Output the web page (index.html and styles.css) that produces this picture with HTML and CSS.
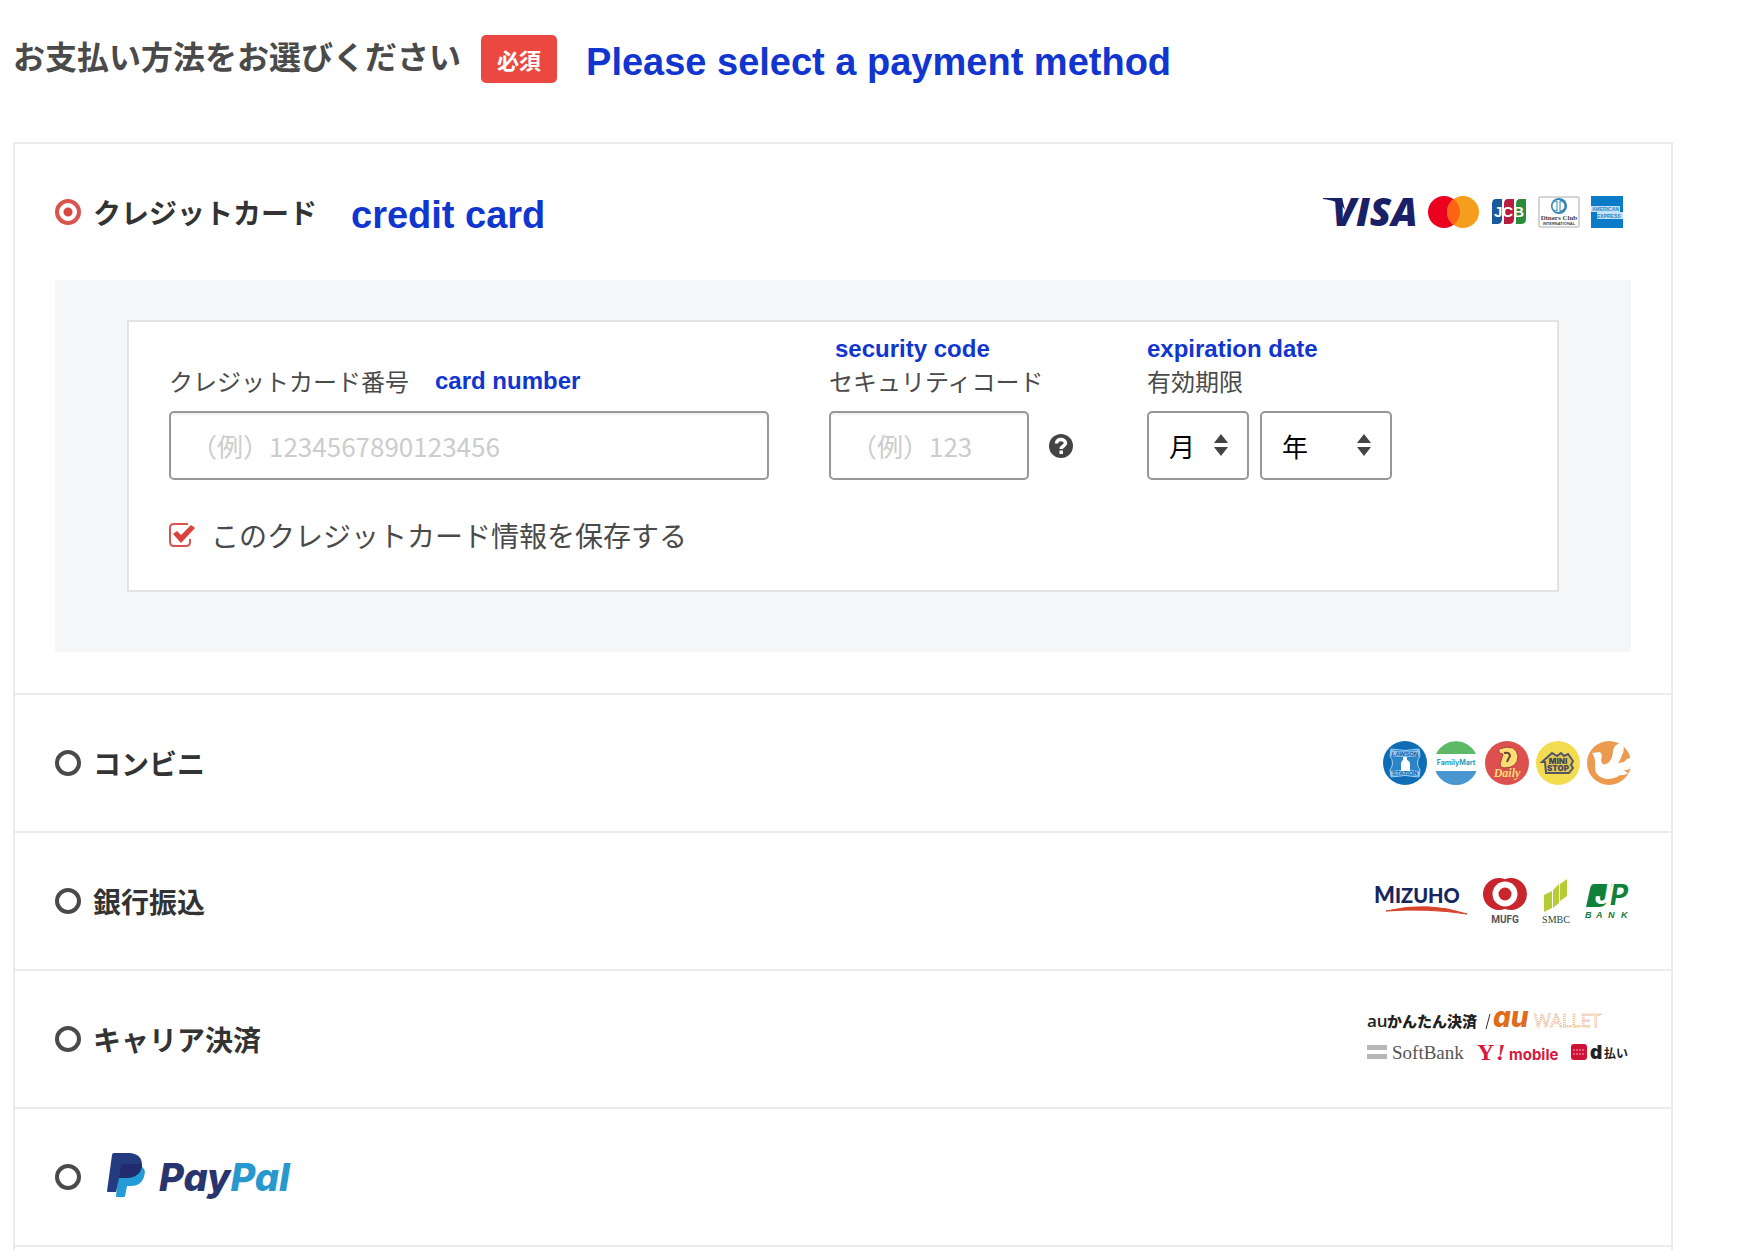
FILE: index.html
```html
<!DOCTYPE html>
<html lang="ja">
<head>
  <meta charset="UTF-8" />
  <meta name="viewport" content="width=device-width, initial-scale=1.0" />
  <title>お支払い方法</title>
  <link rel="stylesheet" href="styles.css">
</head>
<body>
  <header class="page-head">
    <h1>お支払い方法をお選びください</h1>
    <span class="badge">必須</span>
    <span class="en en-lg" lang="en">Please select a payment method</span>
  </header>

  <form class="methods">
    <section class="method">
      <div class="method-head">
        <label class="choice">
          <input type="radio" name="method" value="card" checked />
          <span>クレジットカード</span>
        </label>
        <span class="en en-lg note" lang="en">credit card</span>
        <div class="logos logos-card">
          <svg width="94" height="32" viewBox="0 0 94 32" role="img" aria-label="VISA">
            <path d="M0 2h19l3 12C18 7 10 4 0 3z" fill="#1a2067" />
            <text x="9" y="30" class="t-visa">VISA</text>
          </svg>
          <svg width="52" height="32" viewBox="0 0 52 32" role="img" aria-label="Mastercard">
            <circle cx="16" cy="16" r="16" fill="#eb0020" />
            <circle cx="35" cy="16" r="16" fill="#f59d1c" />
            <path d="M25.500 3.100a16 16 0 0 1 0 25.800a16 16 0 0 1 0-25.800z" fill="#fb6414" />
          </svg>
          <svg width="36" height="28" viewBox="0 0 36 28" role="img" aria-label="JCB">
            <path d="M5 1h6v20q0 5-5 5H1V6q0-5 4-5z" fill="#1a5a9c" />
            <path d="M17 1h6v20q0 5-5 5h-5V6q0-5 4-5z" fill="#b81c40" />
            <path d="M29 1h6v20q0 5-5 5h-5V6q0-5 4-5z" fill="#2b8c39" />
            <text x="18" y="19" class="t-jcb">JCB</text>
          </svg>
          <svg width="42" height="32" viewBox="0 0 42 32" role="img" aria-label="Diners Club">
            <rect x="1" y="1" width="40" height="30" rx="1" fill="#fff" stroke="#a4acb2" />
            <circle cx="21" cy="10" r="8" fill="#2f84b5" />
            <circle cx="20" cy="10" r="6" fill="#fff" />
            <path d="M19 5v10a5 5 0 0 1 0-10zM22 5v10a5 5 0 0 0 0-10z" fill="#fff" stroke="#2f84b5" />
            <text x="21" y="24" class="t-diners">Diners Club</text>
            <text x="21" y="29" class="t-diners-sub">INTERNATIONAL</text>
          </svg>
          <svg width="32" height="32" viewBox="0 0 32 32" role="img" aria-label="American Express">
            <rect width="32" height="32" fill="#0a7bc8" />
            <path d="M0 10h29v6h3v7H6v-7H0z" fill="#c3e1f5" />
            <text x="1" y="15" class="t-amex">AMERICAN</text>
            <text x="6" y="22" class="t-amex">EXPRESS</text>
          </svg>
        </div>
      </div>

      <div class="card-area">
        <div class="card-box">
          <div class="fields">
            <div class="field field-number">
              <div class="label-row">
                <label for="cardNumber">クレジットカード番号</label>
                <span class="en" lang="en">card number</span>
              </div>
              <input type="text" id="cardNumber" placeholder="（例）1234567890123456" />
            </div>

            <div class="field field-code">
              <span class="en en-top en-inset" lang="en">security code</span>
              <label for="cardCode">セキュリティコード</label>
              <div class="controls controls-code">
                <input type="text" id="cardCode" placeholder="（例）123" />
                <button type="button" class="help" aria-label="セキュリティコードについて">
                  <svg width="24" height="24" viewBox="0 0 24 24" aria-hidden="true">
                    <circle cx="12" cy="12" r="12" fill="#444" />
                    <path d="M7.500 9.500C7.500 4 16.500 4.500 16.500 9.300C16.500 12 12.200 12 12.200 15" fill="none" stroke="#fff" stroke-width="3.500" />
                    <rect x="10.500" y="16.500" width="3.500" height="3.500" fill="#fff" />
                  </svg>
                </button>
              </div>
            </div>

            <div class="field">
              <span class="en en-top" lang="en">expiration date</span>
              <label for="month">有効期限</label>
              <div class="controls">
                <div class="select">
                  <select id="month" class="select-month">
                    <option>月</option>
                  </select>
                  <svg class="arrows" width="14" height="22" viewBox="0 0 14 22" aria-hidden="true">
                    <path d="M7 0l7 9H0zM7 22l7-9H0z" fill="#444" />
                  </svg>
                </div>
                <div class="select">
                  <select id="year" class="select-year" aria-label="年">
                    <option>年</option>
                  </select>
                  <svg class="arrows" width="14" height="22" viewBox="0 0 14 22" aria-hidden="true">
                    <path d="M7 0l7 9H0zM7 22l7-9H0z" fill="#444" />
                  </svg>
                </div>
              </div>
            </div>
          </div>

          <label class="save">
            <span class="tick">
              <input type="checkbox" checked />
              <svg width="28" height="26" viewBox="0 0 28 26" aria-hidden="true">
                <path d="M19 2H5Q1 2 1 6v14q0 4 4 4h12q4 0 4-4v-3" fill="none" stroke="#d9534f" stroke-width="2" />
                <path d="M4 12l4-3 4 4L22 3l4 3-14 15z" fill="#d9423d" />
              </svg>
            </span>
            <span>このクレジットカード情報を保存する</span>
          </label>
        </div>
      </div>
    </section>

    <section class="method">
      <div class="method-head">
        <label class="choice">
          <input type="radio" name="method" value="convenience" />
          <span>コンビニ</span>
        </label>
        <div class="logos logos-store">
          <svg width="44" height="44" viewBox="0 0 44 44" role="img" aria-label="LAWSON">
            <circle cx="22" cy="22" r="22" fill="#0f6cb6" />
            <path d="M8 8Q22 11 36 8L37 15Q32 22 37 29L36 36Q22 33 8 36L7 29Q12 22 7 15z" fill="#2b83c8" stroke="#a5d3f3" />
            <path d="M8 9Q22 12 36 9v6Q22 17 8 15zM8 30Q22 28 36 30v5Q22 32 8 35z" fill="#8fc6ee" />
            <path d="M20 16h4v3q3 1 3 4v7H18v-7q0-3 2-4z" fill="#fff" />
            <text x="22" y="15" class="t-lawson">LAWSON</text>
            <text x="22" y="34" class="t-lawson">STATION</text>
          </svg>
          <svg width="44" height="44" viewBox="0 0 44 44" role="img" aria-label="FamilyMart">
            <path d="M2 13a22 22 0 0 1 40 0z" fill="#5cba67" />
            <path d="M1.500 30h41a22 22 0 0 1-41 0z" fill="#4a97cf" />
            <text x="22" y="24" class="t-family">FamilyMart</text>
          </svg>
          <svg width="44" height="44" viewBox="0 0 44 44" role="img" aria-label="Daily">
            <circle cx="22" cy="22" r="22" fill="#dc514d" />
            <path d="M14 8Q31 2 33 15Q33 27 19 27Q15 27 15 23L18 13Q13 13 14 8z" fill="#fbdc76" stroke="#a83d37" />
            <path d="M19 12q6-1 6 3-2 3-3 6" fill="none" stroke="#684632" stroke-width="2" />
            <text x="22" y="36" class="t-daily">Daily</text>
          </svg>
          <svg width="44" height="44" viewBox="0 0 44 44" role="img" aria-label="MINI STOP">
            <circle cx="22" cy="22" r="22" fill="#f4dc51" />
            <path d="M9 21H6L16 12l5 3 4-3 3 3 4-2 5 7-2 4 2 3-4 5H10z" fill="#e2c950" stroke="#555568" stroke-width="2" />
            <text x="22" y="23" class="t-mini">MINI</text>
            <text x="22" y="30" class="t-mini">STOP</text>
          </svg>
          <svg width="44" height="44" viewBox="0 0 44 44" role="img" aria-label="セイコーマート">
            <circle cx="22" cy="22" r="22" fill="#ed9a51" />
            <path d="M5 12L13 11Q16 14 14 19Q15 26 21 22Q26 18 26 9Q29 1 36 3Q38 8 35 14Q33 20 31 22L44 20V26Q41 30 36 29L41 32Q37 35 33 34Q28 38 20 38Q8 36 8 26Q9 17 5 12z" fill="#fff" />
            <path d="M40 18L45 16V23L34 24z" fill="#fff" />
          </svg>
        </div>
      </div>
    </section>

    <section class="method">
      <div class="method-head">
        <label class="choice">
          <input type="radio" name="method" value="bank" />
          <span>銀行振込</span>
        </label>
        <div class="logos logos-bank">
          <svg width="94" height="48" viewBox="0 0 94 48" role="img" aria-label="MIZUHO">
            <text x="0" y="26" class="t-mizuho"><tspan class="t-mizuho-m">M</tspan>IZUHO</text>
            <path d="M12 34Q54 24 93 37Q54 31 12 34z" fill="#d8442b" stroke="#d8442b" />
          </svg>
          <svg width="44" height="48" viewBox="0 0 44 48" role="img" aria-label="MUFG">
            <circle cx="16" cy="17" r="16" fill="#c9252d" />
            <circle cx="28" cy="17" r="16" fill="#c9252d" />
            <circle cx="22" cy="17" r="12.500" fill="#fff" />
            <circle cx="22" cy="17" r="6.500" fill="#c9252d" />
            <text x="22" y="46" class="t-mufg">MUFG</text>
          </svg>
          <svg width="28" height="48" viewBox="0 0 28 48" role="img" aria-label="SMBC">
            <path d="M2 18l8-4v17l-8 4zM11 13l6-6v19l-6 5zM18 7l7-5v17l-7 5z" fill="#b5cc36" />
            <text x="14" y="46" class="t-smbc">SMBC</text>
          </svg>
          <svg width="46" height="48" viewBox="0 0 46 48" role="img" aria-label="JP BANK">
            <path d="M9 7h18l-4 15q-2 8-9 8H1L5 12q1-5 4-5z" fill="#118039" />
            <text x="10" y="27" class="t-jp t-jp-j">J</text>
            <text x="25" y="28" class="t-jp">P</text>
            <text x="0" y="41" class="t-bank">B</text>
            <text x="11" y="41" class="t-bank">A</text>
            <text x="23" y="41" class="t-bank">N</text>
            <text x="36" y="41" class="t-bank">K</text>
          </svg>
        </div>
      </div>
    </section>

    <section class="method">
      <div class="method-head">
        <label class="choice">
          <input type="radio" name="method" value="carrier" />
          <span>キャリア決済</span>
        </label>
        <div class="logos">
          <svg width="264" height="60" viewBox="0 0 264 60" role="img" aria-label="auかんたん決済 / au WALLET、SoftBank、Y!mobile、d払い">
            <text x="0" y="18" class="t-au">au</text>
            <text x="20" y="18" class="t-kantan">かんたん決済</text>
            <path d="M119 20l4-15" stroke="#333" />
            <text x="126" y="18" class="t-au-brand">au</text>
            <text x="167" y="18" class="t-wallet">WALLET</text>
            <path d="M0 36h20v5H0zM0 45h20v5H0z" fill="#b7b7b7" />
            <text x="25" y="50" class="t-softbank">SoftBank</text>
            <text x="110" y="51" class="t-y">Y</text>
            <text x="129" y="51" class="t-y t-y-mark">!</text>
            <text x="142" y="51" class="t-mobile">mobile</text>
            <rect x="204" y="35" width="16" height="16" rx="3" fill="#cf1238" />
            <path d="M206 41h12M206 45h12" stroke="#f5a4b3" stroke-dasharray="2 1" />
            <text x="223" y="50" class="t-d">d</text>
            <text x="237" y="49" class="t-harai">払い</text>
          </svg>
        </div>
      </div>
    </section>

    <section class="method">
      <div class="method-head">
        <label class="choice">
          <input type="radio" name="method" value="paypal" />
          <svg width="210" height="56" viewBox="0 0 210 56" role="img" aria-label="PayPal">
            <path d="M26 16h20q8 3 5 12-3 9-13 9h-4l-2 10q0 1-1 1h-8z" fill="#229bd6" />
            <path d="M21 4h16q12 1 12 12-1 13-17 13h-6l-3 14H15q-1 0-1-1l5-36q0-2 2-2z" fill="#253b80" />
            <path d="M30 15h17q1 0 2 1-2 13-17 13h-6l2-12q0-2 2-2z" fill="#202c6b" />
            <text x="66" y="42" class="t-paypal"><tspan fill="#28356f">Pay</tspan><tspan fill="#2899ce">Pal</tspan></text>
          </svg>
        </label>
      </div>
    </section>
  </form>
</body>
</html>
```
FILE: styles.css
```css
* {
  box-sizing: border-box;
}

body {
  font-family: "Noto Sans CJK JP", sans-serif;
  color: #4a4a4a;
  background: #fff;
  margin: 0;
  padding: 35px 73px 0 13px;
  min-height: 100vh;
  display: flex;
  flex-direction: column;
}

.page-head {
  display: flex;
  align-items: center;
  flex-wrap: wrap;
  gap: 20px;
  margin-bottom: 59px;
}

h1 {
  margin: 0;
  padding-bottom: 8px;
  font-size: 32px;
  line-height: 40px;
  font-weight: 700;
}

.badge {
  background: #ec4842;
  color: #fff;
  font-size: 22px;
  font-weight: 700;
  line-height: 48px;
  padding: 0 16px;
  border-radius: 5px;
}

.en {
  font-family: "Liberation Sans", Arial, sans-serif;
  font-weight: bold;
  font-size: 24px;
  line-height: 32px;
  color: #1136cf;
}

.en-lg {
  font-size: 38px;
  line-height: 42px;
  padding-top: 6px;
}

.page-head .en {
  margin-left: 9px;
}

/* list of methods */
.methods {
  flex: 1;
  border: 2px solid #ebebeb;
  border-bottom: 0;
}

.method {
  padding: 0 40px;
  border-bottom: 2px solid #ebebeb;
}

.method-head {
  display: flex;
  align-items: center;
  min-height: 136px;
}

.choice {
  display: flex;
  align-items: center;
  gap: 12px;
  font-size: 28px;
  font-weight: 700;
  line-height: 40px;
  color: #333;
}

.choice input {
  appearance: none;
  width: 26px;
  height: 26px;
  margin: 0;
  border: 4px solid #4a4a4a;
  border-radius: 50%;
  background: #fff;
}

.choice input:checked {
  border-color: #d9534f;
  background: radial-gradient(circle, #d9453f 4px, #fff 5px);
}

.note {
  margin-left: 34px;
}

.logos {
  display: flex;
  align-items: center;
  margin-left: auto;
}

.logos-card {
  gap: 11px;
  padding-right: 8px;
}

.logos-store {
  gap: 7px;
}

.logos-bank {
  gap: 15px;
}

/* card form */
.card-area {
  background: #f5f6f8;
  padding: 40px 72px 60px;
  margin-bottom: 41px;
}

.card-box {
  background: #fff;
  border: 2px solid #e3e3e5;
  padding: 11px 40px 35px;
}

.fields {
  display: flex;
  flex-wrap: wrap;
  align-items: flex-end;
}

.field {
  display: flex;
  flex-direction: column;
}

.field label {
  font-size: 24px;
  line-height: 32px;
}

.field-number {
  flex: 0 1 600px;
  margin-right: 60px;
}

.field-code {
  margin-right: 74px;
}

.label-row {
  display: flex;
  align-items: center;
  gap: 26px;
}

.en-inset {
  padding-left: 6px;
}

.field input,
.field select {
  font-family: inherit;
  font-size: 26px;
  height: 69px;
  border: 2px solid #979797;
  border-radius: 5px;
  background: #fff;
}

.field input {
  width: 100%;
  padding: 0 20px;
  box-shadow: inset 0 2px 2px #f0f0f0;
}

.field-number input,
.controls {
  margin-top: 14px;
}

.field input::placeholder {
  color: #ccc;
}

.controls {
  display: flex;
  align-items: center;
  gap: 11px;
}

.controls-code {
  gap: 20px;
}

.field-code input {
  width: 200px;
}

.help {
  display: flex;
  padding: 0;
  border: 0;
  background: none;
  cursor: pointer;
}

.select {
  position: relative;
}

.field select {
  display: block;
  appearance: none;
  color: #000;
  padding: 0 20px;
}

.field .select-month {
  width: 102px;
}

.field .select-year {
  width: 132px;
}

.arrows {
  position: absolute;
  right: 21px;
  top: 23px;
  pointer-events: none;
}

.save {
  display: flex;
  align-items: center;
  gap: 14px;
  margin-top: 35px;
  font-size: 28px;
  line-height: 40px;
}

.tick {
  display: grid;
  align-items: center;
}

.tick input,
.tick svg {
  grid-area: 1 / 1;
}

.tick input {
  appearance: none;
  width: 24px;
  height: 24px;
  margin: 0;
}

.tick input:not(:checked) + svg path:last-child {
  display: none;
}

/* lettering inside the logos */
.t-visa {
  font: italic 800 39px "Open Sans", sans-serif;
  fill: #1a2067;
}

.t-jcb {
  font: bold 15px "Liberation Sans", sans-serif;
  fill: #fff;
  text-anchor: middle;
}

.t-diners {
  font: bold 7px "Liberation Serif", serif;
  fill: #444;
  text-anchor: middle;
}

.t-diners-sub {
  font: bold 4px "Liberation Sans", sans-serif;
  fill: #444;
  text-anchor: middle;
}

.t-amex {
  font: bold 5px "Liberation Sans", sans-serif;
  fill: #2a86c6;
}

.t-lawson {
  font: bold 6px "Liberation Sans", sans-serif;
  fill: #12609f;
  text-anchor: middle;
}

.t-family {
  font: bold 7px Inter, sans-serif;
  fill: #2f9bb5;
  text-anchor: middle;
}

.t-daily {
  font: italic bold 12px "Liberation Serif", serif;
  fill: #fbdc76;
  text-anchor: middle;
}

.t-mini {
  font: 900 8px Inter, sans-serif;
  fill: #46465c;
  text-anchor: middle;
}

.t-mizuho {
  font: 900 20px Lato, sans-serif;
  fill: #17265f;
}

.t-mizuho-m {
  font-size: 22px;
}

.t-mufg {
  font: bold 10px Roboto, sans-serif;
  fill: #555;
  text-anchor: middle;
}

.t-smbc {
  font: 10px "Liberation Serif", serif;
  fill: #1d4a38;
  text-anchor: middle;
}

.t-jp {
  font: italic bold 28px Inter, sans-serif;
  fill: #118039;
}

.t-jp-j {
  fill: #fff;
}

.t-bank {
  font: italic bold 9px "Liberation Sans", sans-serif;
  fill: #118039;
}

.t-au {
  font: 600 17px "Open Sans", sans-serif;
  fill: #222;
}

.t-kantan {
  font: 900 15px "Noto Sans CJK JP", sans-serif;
  fill: #222;
}

.t-au-brand {
  font: italic 800 28px Inter, sans-serif;
  fill: #dd6c1b;
}

.t-wallet {
  font: 18px "Open Sans", sans-serif;
  fill: #fff;
  stroke: #e6a77c;
  stroke-dasharray: 1 1;
}

.t-softbank {
  font: 19px "Liberation Serif", serif;
  fill: #555;
}

.t-y {
  font: bold 24px "Liberation Serif", serif;
  fill: #d7193f;
}

.t-y-mark {
  font-style: italic;
}

.t-mobile {
  font: bold 15px Inter, sans-serif;
  fill: #d7193f;
}

.t-d {
  font: 900 19px Inter, sans-serif;
  fill: #222;
}

.t-harai {
  font: bold 12px "Noto Sans CJK JP", sans-serif;
  fill: #222;
}

.t-paypal {
  font: italic 800 38px Inter, sans-serif;
}
```
